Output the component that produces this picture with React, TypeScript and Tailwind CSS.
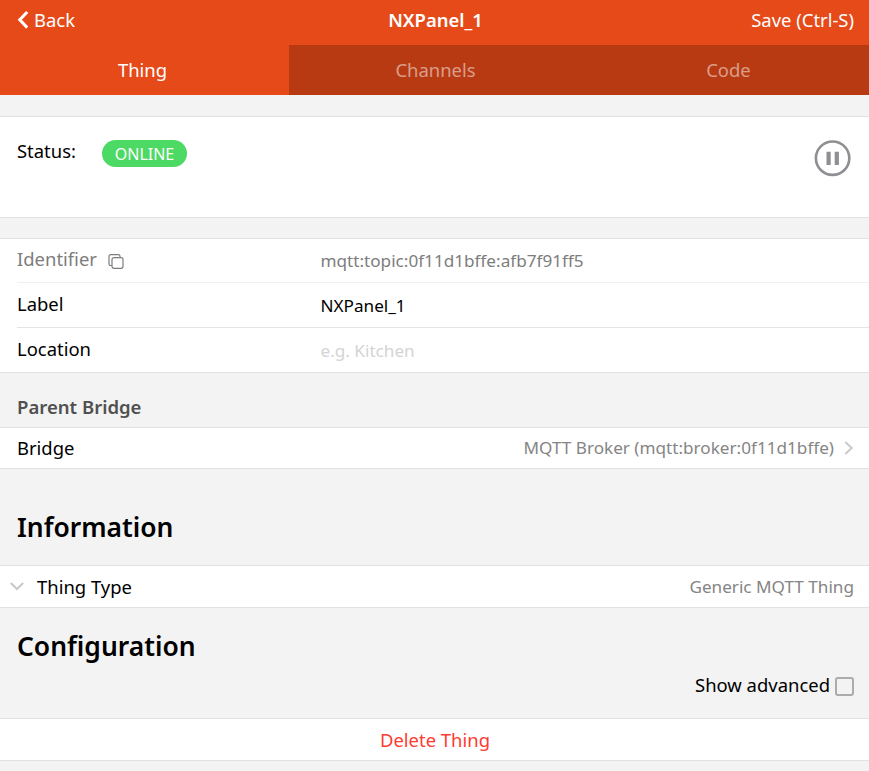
import React from "react";

const font = "font-['Noto_Sans',sans-serif]";
const line = "border-[#e1e1e1]";

function Row({ label, h, children }: { label: React.ReactNode; h: string; children: React.ReactNode }) {
  return (
    <div className={`flex ${h}`}>
      <div className="w-[303.5px] leading-7">{label}</div>
      <div className="pt-[2px] text-[17.15px] leading-7">{children}</div>
    </div>
  );
}

export default function App() {
  return (
    <div className={`${font} flex h-[771px] w-full flex-col overflow-hidden bg-[#f3f3f3] text-[18.45px] text-black`}>
      <header className="flex h-[45px] shrink-0 items-center bg-[#e64a19] pb-[5px] leading-7 text-white">
        <div className="flex flex-1 items-center pl-[17px]">
          <svg width="12" height="20" viewBox="0 0 12 20" fill="none" stroke="currentColor" strokeWidth="3"><path d="M10.2 2 2.8 9.8l7.4 7.8" /></svg>
          <span className="pl-[5px]">Back</span>
        </div>
        <div className="font-semibold">NXPanel_1</div>
        <div className="flex-1 pr-[15px] text-right">Save (Ctrl-S)</div>
      </header>
      <nav className="flex h-[50px] shrink-0 overflow-hidden bg-[#b73a13] text-white/50">
        <div className="flex w-[289px] shrink-0 items-center justify-center bg-[#e64a19] pr-1 text-white">Thing</div>
        <div className="flex w-[293px] shrink-0 items-center justify-center">Channels</div>
        <div className="flex w-[293px] shrink-0 items-center justify-center">Code</div>
      </nav>
      <section className={`mt-[21px] flex h-[102px] shrink-0 border-y ${line} bg-white pr-[18px] pl-[17px]`}>
        <span className="w-[85px] pt-[20px] leading-7">Status:</span>
        <span className="mt-[23px] h-[27px] w-[85px] rounded-full bg-[#4cd964] pt-px text-center text-[16px] leading-[27px] text-white">ONLINE</span>
        <svg className="mt-[23px] ml-auto" width="37" height="37" viewBox="0 0 37 37" fill="none" stroke="#8e8e93"><circle cx="18.6" cy="18.2" r="16.7" strokeWidth="2.6" /><path d="M14.6 11.7v13.2M22.8 11.7v13.2" strokeWidth="4.2" /></svg>
      </section>
      <section className={`mt-5 h-[135px] shrink-0 border-y ${line} bg-white pl-[17px]`}>
        <div className="text-[#7d7d7d]">
          <Row h="h-11 border-b border-[#f0f0f0] pt-[6px]" label={<span className="flex items-center">Identifier<svg className="mt-1 ml-[11px]" width="16" height="15" viewBox="0 0 16 15" fill="none" stroke="currentColor" strokeWidth="1.2"><rect x="4" y="3.7" width="11" height="10.6" rx="2" /><path d="M12 3.5V2.3A1.6 1.6 0 0 0 10.4.7H2.6A1.6 1.6 0 0 0 1 2.3v7.6a1.6 1.6 0 0 0 1.6 1.6H4" /></svg></span>}>mqtt:topic:0f11d1bffe:afb7f91ff5</Row>
        </div>
        <Row h="h-[45px] border-b border-[#e4e4e4] pt-[7px]" label="Label">NXPanel_1</Row>
        <Row h="h-11 pt-[7px]" label="Location"><span className="text-[#d4d4d4]">e.g. Kitchen</span></Row>
      </section>
      <h3 className="h-[54px] shrink-0 pt-[20px] pl-[17px] text-[18.55px] leading-7 font-semibold text-[#505050]">Parent Bridge</h3>
      <section className={`flex h-[42px] shrink-0 items-center justify-between border-y ${line} bg-white pr-[15px] pl-[17px]`}>
        <span>Bridge</span>
        <span className="flex items-center text-[17.15px] text-[#858585]">MQTT Broker (mqtt:broker:0f11d1bffe)<svg className="ml-[10px]" width="10" height="16" viewBox="0 0 10 16" fill="none" stroke="#c9c9cb" strokeWidth="2"><path d="m1.3 2 6.4 6-6.4 6" /></svg></span>
      </section>
      <h2 className="h-[96px] shrink-0 pt-[40px] pl-[17px] text-[26.45px] leading-9 font-semibold">Information</h2>
      <section className={`flex h-[43px] shrink-0 items-center border-y ${line} bg-white pr-[15px] pl-[9.5px]`}>
        <svg className="-mt-0.5" width="14" height="10" viewBox="0 0 14 10" fill="none" stroke="#c9c9cb" strokeWidth="2"><path d="m.8 2 6.2 6 6.2-6" /></svg>
        <span className="pl-[13.5px]">Thing Type</span>
        <span className="ml-auto text-[17.15px] text-[#858585]">Generic MQTT Thing</span>
      </section>
      <h2 className="h-[64px] shrink-0 pt-[20px] pl-[17px] text-[26.45px] leading-9 font-semibold">Configuration</h2>
      <div className="flex h-[46px] shrink-0 items-start justify-end pr-[15px]"><span className="-mt-px leading-7">Show advanced</span><span className="mt-[5px] ml-[5px] size-[19px] rounded-[3px] border-2 border-[#ababab] bg-[#f3f3f3]" /></div>
      <section className={`flex h-[43px] shrink-0 items-center justify-center border-y ${line} bg-white pl-px text-[#ff3b30]`}>Delete Thing</section>
    </div>
  );
}
